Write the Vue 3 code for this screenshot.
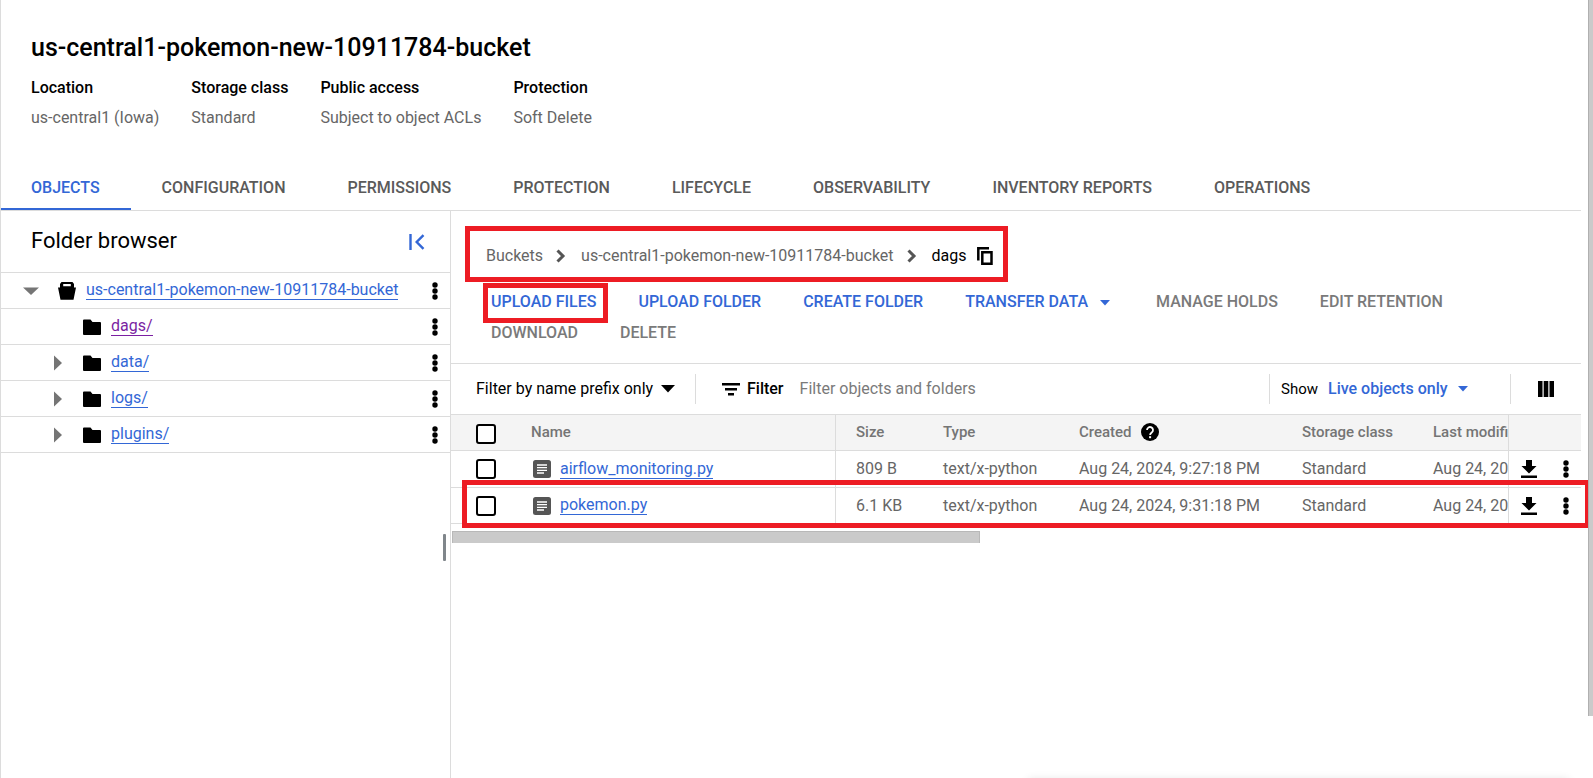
<script setup>
import { ref } from 'vue'

const bucket = 'us-central1-pokemon-new-10911784-bucket'
const facts = [
  ['Location', 'us-central1 (Iowa)'],
  ['Storage class', 'Standard'],
  ['Public access', 'Subject to object ACLs'],
  ['Protection', 'Soft Delete'],
]
const tabs = ['OBJECTS', 'CONFIGURATION', 'PERMISSIONS', 'PROTECTION', 'LIFECYCLE', 'OBSERVABILITY', 'INVENTORY REPORTS', 'OPERATIONS']
const activeTab = ref('OBJECTS')
const folders = [
  { name: 'dags/', open: true, visited: true },
  { name: 'data/' },
  { name: 'logs/' },
  { name: 'plugins/' },
]
const files = [
  { name: 'airflow_monitoring.py', size: '809 B', type: 'text/x-python', created: 'Aug 24, 2024, 9:27:18 PM', storage: 'Standard', modified: 'Aug 24, 2024, 9:27:18 PM' },
  { name: 'pokemon.py', size: '6.1 KB', type: 'text/x-python', created: 'Aug 24, 2024, 9:31:18 PM', storage: 'Standard', modified: 'Aug 24, 2024, 9:31:18 PM' },
]
const filterText = ref('')
</script>

<template>
  <div class="page">
    <header class="head">
      <h1>{{ bucket }}</h1>
      <dl class="facts">
        <div v-for="[label, value] in facts" :key="label">
          <dt>{{ label }}</dt>
          <dd>{{ value }}</dd>
        </div>
      </dl>
    </header>

    <nav class="tabs">
      <button v-for="tab in tabs" :key="tab" :class="{ active: tab === activeTab }" @click="activeTab = tab">{{ tab }}</button>
    </nav>

    <div class="body">
      <aside class="side">
        <div class="side-head">
          <h2>Folder browser</h2>
          <button class="icon" aria-label="Collapse folder browser">
            <svg width="16" height="16" viewBox="0 0 16 16" fill="none" stroke="#3367d6" stroke-width="2.400"><path d="M1.500 0v16M14.500 1.200 7.700 8l6.800 6.800" /></svg>
          </button>
        </div>
        <ul class="tree">
          <li class="root">
            <button class="icon twist" aria-label="Collapse bucket">
              <svg width="16" height="16" viewBox="0 0 16 16"><path d="M0 4.500h16L8 12z" fill="#757575" /></svg>
            </button>
            <svg class="glyph" width="18" height="18" viewBox="0 0 18 18"><path fill-rule="evenodd" d="M3.500 0h11L16 2v3.500h2L15.500 17.700h-13L0 5.500h2V2zM5.200 2v2.300h7.600V2z" /></svg>
            <a href="#">{{ bucket }}</a>
            <button class="icon more" aria-label="Bucket actions">
              <svg width="6" height="18" viewBox="0 0 6 18"><circle cx="3" cy="3" r="2.700" /><circle cx="3" cy="9" r="2.700" /><circle cx="3" cy="15" r="2.700" /></svg>
            </button>
          </li>
          <li v-for="f in folders" :key="f.name" class="child">
            <span v-if="f.open" class="twist"></span>
            <button v-else class="icon twist" aria-label="Expand folder">
              <svg width="16" height="16" viewBox="0 0 16 16"><path d="M4 .5 12 8l-8 7.500z" fill="#757575" /></svg>
            </button>
            <svg class="glyph" width="18" height="18" viewBox="0 0 18 18"><path d="M1 1.500h6.500L9.500 4H17q1 0 1 1v11q0 1-1 1H1q-1 0-1-1V2.500q0-1 1-1z" /></svg>
            <a href="#" :class="{ visited: f.visited }">{{ f.name }}</a>
            <button class="icon more" aria-label="Folder actions">
              <svg width="6" height="18" viewBox="0 0 6 18"><circle cx="3" cy="3" r="2.700" /><circle cx="3" cy="9" r="2.700" /><circle cx="3" cy="15" r="2.700" /></svg>
            </button>
          </li>
        </ul>
        <span class="handle"></span>
      </aside>

      <main class="main">
        <nav class="crumbs">
          <a href="#">Buckets</a>
          <svg width="10" height="14" viewBox="0 0 10 14" fill="none" stroke="#555" stroke-width="3"><path d="m1.500 1.500 5.500 5.500-5.500 5.500" /></svg>
          <a href="#">{{ bucket }}</a>
          <svg width="10" height="14" viewBox="0 0 10 14" fill="none" stroke="#555" stroke-width="3"><path d="m1.500 1.500 5.500 5.500-5.500 5.500" /></svg>
          <span class="here">dags</span>
          <button class="icon" aria-label="Copy path">
            <svg width="16" height="18" viewBox="0 0 16 18" fill="none" stroke="#000" stroke-width="2.500"><path d="M1.300 13.500V1.300h10.700M5.300 5.300h9.200v11.400H5.300z" /></svg>
          </button>
        </nav>

        <div class="actions">
          <button class="marked">UPLOAD FILES</button>
          <button>UPLOAD FOLDER</button>
          <button>CREATE FOLDER</button>
          <button>TRANSFER DATA<svg class="caret" width="10" height="6" viewBox="0 0 10 6"><path d="M0 0h10L5 5.500z" fill="#3367d6" /></svg></button>
          <button disabled>MANAGE HOLDS</button>
          <button disabled>EDIT RETENTION</button>
          <button disabled>DOWNLOAD</button>
          <button disabled>DELETE</button>
        </div>

        <div class="filters">
          <div class="pick prefix">
            <select aria-label="Filter mode"><option>Filter by name prefix only</option></select>
            <svg width="14" height="8" viewBox="0 0 14 8"><path d="M0 0h14L7 7.500z" /></svg>
          </div>
          <label class="filter" for="filter">
            <svg width="18" height="14" viewBox="0 0 18 14"><path d="M0 1h18v2.500H0zM3 6h12v2.500H3zM6 11h6v2.500H6z" /></svg>
            Filter
          </label>
          <input id="filter" v-model="filterText" class="query" type="text" placeholder="Filter objects and folders" />
          <div class="pick show">
            <label for="show">Show</label>
            <select id="show"><option>Live objects only</option></select>
            <svg width="10" height="6" viewBox="0 0 10 6"><path d="M0 0h10L5 5.500z" fill="#3367d6" /></svg>
          </div>
          <button class="icon columns" aria-label="Column display options">
            <svg width="16" height="16" viewBox="0 0 16 16"><path d="M0 0h4.500v16H0zM5.700 0h4.600v16H5.700zM11.500 0H16v16h-4.500z" /></svg>
          </button>
        </div>

        <div class="grid">
          <table>
            <colgroup>
              <col class="c-check" /><col class="c-name" /><col class="c-size" /><col class="c-type" /><col class="c-created" /><col class="c-storage" /><col /><col class="c-act" />
            </colgroup>
            <thead>
              <tr>
                <th class="check"><input type="checkbox" aria-label="Select all" /></th>
                <th class="name">Name</th>
                <th>Size</th>
                <th>Type</th>
                <th>
                  <span class="with-help">Created
                    <svg width="18" height="18" viewBox="0 0 18 18"><circle cx="9" cy="9" r="9" /><path d="M6 7a3 3 0 1 1 4.700 2.500C9.600 10.300 9.100 10.700 9.100 12" fill="none" stroke="#fff" stroke-width="1.800" /><path d="M8.100 13.200h2v2h-2z" fill="#fff" /></svg>
                  </span>
                </th>
                <th>Storage class</th>
                <th>Last modified</th>
                <th class="act"></th>
              </tr>
            </thead>
            <tbody>
              <tr v-for="f in files" :key="f.name">
                <td class="check"><input type="checkbox" :aria-label="'Select ' + f.name" /></td>
                <td class="name">
                  <span class="file">
                    <svg width="18" height="18" viewBox="0 0 18 18"><rect width="18" height="18" rx="2.500" fill="#555" /><path d="M4 5h10M4 7.700h10M4 10.300h10M4 13h7" stroke="#fff" stroke-width="1.300" /></svg>
                    <a href="#">{{ f.name }}</a>
                  </span>
                </td>
                <td>{{ f.size }}</td>
                <td>{{ f.type }}</td>
                <td>{{ f.created }}</td>
                <td>{{ f.storage }}</td>
                <td>{{ f.modified }}</td>
                <td class="act">
                  <span class="act-in">
                    <button class="icon" aria-label="Download">
                      <svg width="16" height="18" viewBox="0 0 16 18"><path d="M5 0h6v6h4.500L8 13.500.5 6H5zM0 15.500h16V18H0z" /></svg>
                    </button>
                    <button class="icon" aria-label="More actions">
                      <svg width="6" height="18" viewBox="0 0 6 18"><circle cx="3" cy="3" r="2.700" /><circle cx="3" cy="9" r="2.700" /><circle cx="3" cy="15" r="2.700" /></svg>
                    </button>
                  </span>
                </td>
              </tr>
            </tbody>
          </table>
          <span class="row-mark"></span>
          <div class="hscroll"></div>
        </div>
      </main>
    </div>
    <span class="vscroll"></span>
    <span class="toast"></span>
  </div>
</template>

<style>
body { margin: 0; background: #fff; }
</style>

<style scoped>
* { box-sizing: border-box; }
.page {
  position: relative;
  display: flex;
  flex-direction: column;
  min-height: 100vh;
  padding-right: 12px;
  border-left: 1px solid #dcdcdc;
  overflow: hidden;
  font: 400 16px/24px Roboto, "Noto Sans", sans-serif;
  color: #666;
}
button, select, input { font: inherit; color: inherit; }
button, select { padding: 0; border: 0; background: none; appearance: none; cursor: pointer; }
.icon { display: flex; align-items: center; justify-content: center; }
svg { display: block; flex: none; }
a { color: #3367d6; text-decoration: none; }

.head { padding: 32px 30px 0; }
h1 { margin: 0; font-size: 25px; line-height: 32px; font-weight: 500; color: #000; }
.facts { display: flex; gap: 32px; margin: 12px 0 0; }
.facts dt { font-weight: 500; color: #000; }
.facts dd { margin: 6px 0 0; }

.tabs { display: flex; gap: 1px; margin-top: 34px; border-bottom: 1px solid #dcdcdc; }
.tabs button { height: 46px; padding: 4px 31px 0 30px; border-bottom: 2px solid transparent; font-weight: 500; color: #5a5a5a; white-space: nowrap; }
.tabs .active { color: #3367d6; border-bottom-color: #3367d6; }

.body { display: flex; flex: 1; }
.side { position: relative; flex: none; width: 450px; border-right: 1px solid #dcdcdc; }
.side-head { display: flex; align-items: center; justify-content: space-between; height: 62px; padding: 0 25px 0 30px; border-bottom: 1px solid #dcdcdc; }
h2 { margin: 0 0 2px; font-size: 22px; line-height: 28px; font-weight: 400; color: #000; }
.tree { margin: 0; padding: 0; list-style: none; }
.tree li { display: flex; align-items: center; height: 36px; padding: 0 12px 0 22px; border-bottom: 1px solid #dcdcdc; }
.tree .child { padding-left: 49px; }
.twist { width: 16px; height: 16px; }
.root .glyph { margin: 0 10px 0 19px; }
.child .glyph { margin: 0 10px 0 17px; }
.tree a, .file a { line-height: 19px; margin-bottom: 1px; border-bottom: 1px solid #3367d6; }
.tree a.visited { color: #7b1fa2; border-color: #7b1fa2; }
.more { margin-left: auto; }
.handle { position: absolute; top: 323px; right: 4px; width: 3px; height: 27px; border-radius: 1px; background: #80868b; }

.main { flex: 1; min-width: 0; }
.crumbs { display: flex; align-items: center; width: fit-content; height: 56px; margin: 15px 0 0 14px; padding: 4px 10px 0 16px; border: 5px solid #ed1c24; }
.crumbs a { color: #666; }
.crumbs > svg { margin: 0 15px 0 13px; }
.crumbs .here { color: #000; margin-right: 10px; }

.actions { display: flex; flex-wrap: wrap; column-gap: 42px; padding: 4px 40px 14px; min-height: 81px; }
.actions button { position: relative; display: flex; align-items: center; height: 31px; font-weight: 500; color: #3367d6; white-space: nowrap; }
.actions button:disabled { color: #7a7a7a; }
.actions .caret { margin: 2px 4px 0 12px; }
.marked::after { content: ""; position: absolute; inset: -3px -12px -6px -8px; border: 5px solid #ed1c24; }

.filters { display: flex; align-items: center; height: 51px; padding-left: 25px; border-top: 1px solid #dcdcdc; color: #000; }
.pick { display: flex; align-items: center; height: 30px; }
.prefix { gap: 7px; padding-right: 20px; border-right: 1px solid #dcdcdc; }
.filter { display: flex; align-items: center; gap: 7px; margin-left: 26px; font-weight: 500; }
.query { flex: 1; min-width: 0; margin: 0 16px; padding: 0; border: 0; outline: 0; }
.query::placeholder { color: #7a7a7a; opacity: 1; }
.show { gap: 10px; padding: 0 42px 0 11px; border-left: 1px solid #dcdcdc; border-right: 1px solid #dcdcdc; }
.show label { font-size: 15px; }
.show select { font-weight: 500; color: #3367d6; }
.columns { width: 70px; }

.grid { position: relative; }
table { width: 100%; table-layout: fixed; border-collapse: separate; border-spacing: 0; border-top: 1px solid #dcdcdc; }
.c-check { width: 80px; }
.c-name { width: 305px; }
.c-size { width: 87px; }
.c-type { width: 136px; }
.c-created { width: 223px; }
.c-storage { width: 131px; }
.c-act { width: 73px; }
th, td { height: 36px; padding: 0 0 0 20px; border-bottom: 1px solid #dcdcdc; overflow: hidden; white-space: nowrap; text-align: left; vertical-align: middle; }
th { padding-bottom: 2px; background: #f4f4f4; font-size: 15px; font-weight: 500; color: #757575; }
tbody tr:first-child td { height: 37px; }
.check { padding-left: 25px; }
th.check { padding: 2px 0 0 25px; }
.name { padding-left: 0; border-right: 1px solid #dcdcdc; }
.act { padding: 0 0 0 12px; border-left: 1px solid #dcdcdc; }
.check input { display: block; width: 20px; height: 20px; margin: 0; border: 2px solid #000; border-radius: 3px; background: #fff; appearance: none; }
.with-help { display: flex; align-items: center; gap: 9px; }
.file { display: flex; align-items: center; gap: 9px; padding-left: 2px; }
.act-in { display: flex; align-items: center; gap: 26px; }
.row-mark { position: absolute; top: 66px; left: 11px; right: -9px; height: 48px; border: 5px solid #ed1c24; }
.hscroll { width: 46.7%; height: 12px; margin: 7px 0 0 1px; background: #cacaca; border: 1px solid #b8b8b8; border-bottom: 0; }

.vscroll { position: absolute; top: 0; right: 0; width: 5px; height: 92vh; background: #cacaca; border-left: 1px solid #b0b0b0; }
.toast { position: absolute; right: 24px; bottom: -9px; width: 34%; height: 8px; box-shadow: 0 0 8px rgba(0, 0, 0, 0.1); }
</style>
